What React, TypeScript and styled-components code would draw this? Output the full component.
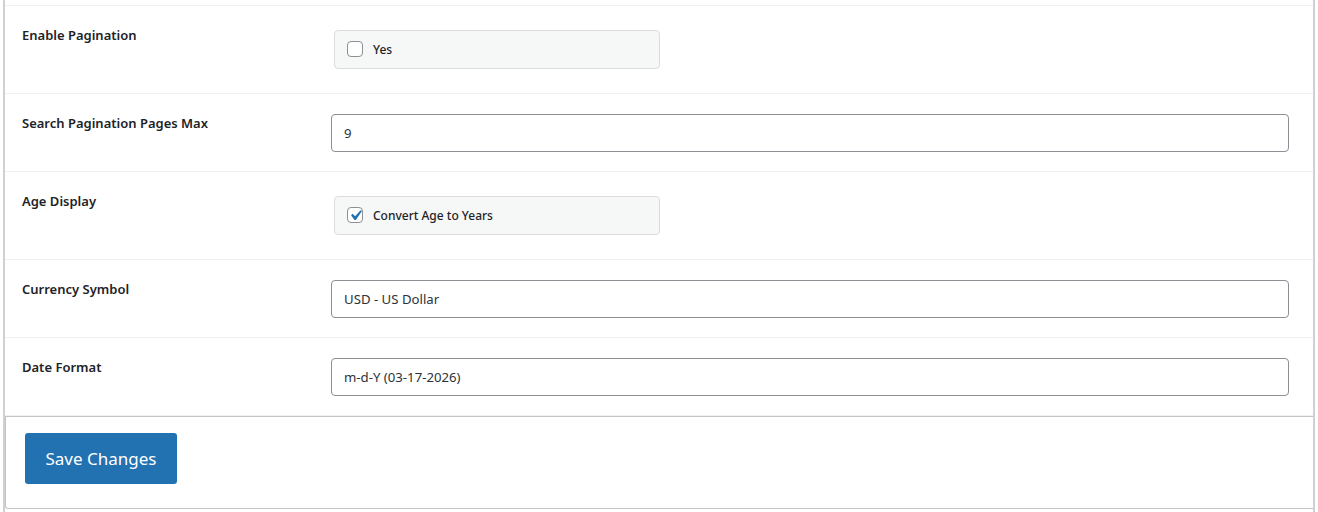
import React from 'react'
import styled, { createGlobalStyle } from 'styled-components'

const GlobalStyle = createGlobalStyle`
  html, body {
    margin: 0;
    padding: 0;
    background: #ffffff;
  }
  body {
    font-family: "Noto Sans", "Open Sans", sans-serif;
    color: #1d2327;
  }
`

interface Setting {
  label: string
  kind: 'checkbox' | 'text'
  value: string
  checked?: boolean
}

const settings: Setting[] = [
  { label: 'Enable Pagination', kind: 'checkbox', value: 'Yes', checked: false },
  { label: 'Search Pagination Pages Max', kind: 'text', value: '9' },
  { label: 'Age Display', kind: 'checkbox', value: 'Convert Age to Years', checked: true },
  { label: 'Currency Symbol', kind: 'text', value: 'USD - US Dollar' },
  { label: 'Date Format', kind: 'text', value: 'm-d-Y (03-17-2026)' }
]

const Page = styled.div`
  height: 512px;
  padding: 0 3px;
  box-sizing: border-box;
`

const Panel = styled.div`
  height: 100%;
  border-left: 2px solid #d0d0d3;
  border-right: 2px solid #d0d0d3;
  box-sizing: border-box;
  display: flex;
  flex-direction: column;
  overflow: hidden;
`

const CutRow = styled.div`
  height: 5px;
  flex: none;
  border-bottom: 1px solid #f0f0f1;
`

const Row = styled.div`
  display: grid;
  grid-template-columns: 326px 1fr;
  flex: none;
  border-bottom: 1px solid #f0f0f1;
  &:last-of-type {
    border-bottom: none;
  }
`

const Label = styled.div`
  padding: 21px 10px 0 17px;
  font-size: 13px;
  line-height: 17px;
  font-weight: 600;
  color: #1d2327;
`

const Field = styled.div<{ $tight?: boolean }>`
  padding: 20px 24px ${(p) => (p.$tight ? '19.4px' : '20px')} 0;
`

const TextInput = styled.div`
  height: 38px;
  box-sizing: border-box;
  border: 1px solid #8c8f94;
  border-radius: 4px;
  padding: 0 12px;
  display: flex;
  align-items: center;
  font-size: 13.2px;
  color: #2c3338;
`

const CheckGroup = styled.label`
  margin: 4px 0 4px 3px;
  width: 326px;
  height: 38.6px;
  box-sizing: border-box;
  background: #f6f7f7;
  border: 1px solid #dcdcde;
  border-radius: 4px;
  padding: 0 12px;
  display: flex;
  align-items: center;
  gap: 10px;
  font-size: 12px;
  font-weight: 500;
  color: #1d2327;
`

const Box = styled.span`
  width: 16px;
  height: 16px;
  box-sizing: border-box;
  border: 1px solid #8c8f94;
  border-radius: 4px;
  background: #ffffff;
  display: flex;
  align-items: center;
  justify-content: center;
  flex: none;
  overflow: visible;
`

const Footer = styled.div`
  margin-top: auto;
  flex: none;
  border: 1px solid #c3c4c7;
  border-right: none;
  border-radius: 0 0 0 3px;
  height: 93px;
  box-sizing: border-box;
  padding: 16px 19px;
  margin-bottom: 3px;
`

const SaveButton = styled.button`
  width: 152px;
  height: 51px;
  border: none;
  border-radius: 3px;
  background: #2271b1;
  color: #ffffff;
  font-family: "Noto Sans", "Open Sans", sans-serif;
  font-size: 17px;
  font-weight: 400;
  cursor: pointer;
`

const Check = (): JSX.Element => (
  <svg width="21" height="21" viewBox="0 0 20 20" style={{ flex: 'none' }}>
    <path
      d="M14.83 4.89l1.34.94-5.81 8.38H9.02L5.78 9.67l1.34-1.25 2.57 2.4z"
      fill="#2271b1"
    />
  </svg>
)

const App = (): JSX.Element => {
  return (
    <>
      <GlobalStyle />
      <Page>
        <Panel>
          <CutRow />
          {settings.map((s) => (
            <Row key={s.label}>
              <Label>{s.label}</Label>
              {s.kind === 'text' ? (
                <Field $tight>
                  <TextInput>{s.value}</TextInput>
                </Field>
              ) : (
                <Field>
                  <CheckGroup>
                    <Box>{s.checked && <Check />}</Box>
                    {s.value}
                  </CheckGroup>
                </Field>
              )}
            </Row>
          ))}
          <Footer>
            <SaveButton>Save Changes</SaveButton>
          </Footer>
        </Panel>
      </Page>
    </>
  )
}

export default App
